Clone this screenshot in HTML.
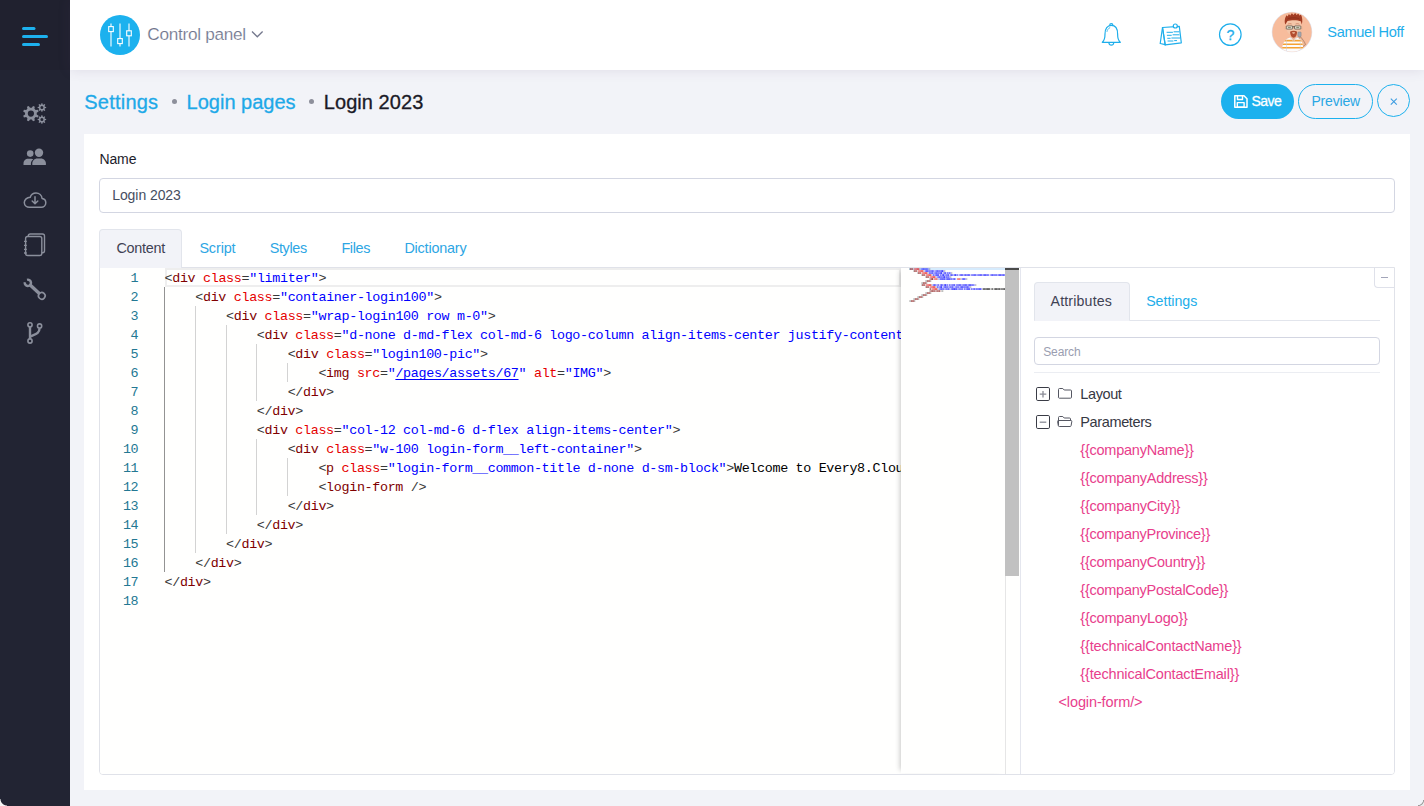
<!DOCTYPE html>
<html lang="en">
<head>
<meta charset="utf-8">
<title>Login 2023 - Control panel</title>
<style>
*{box-sizing:border-box;margin:0;padding:0}
html,body{width:1424px;height:806px;overflow:hidden}
body{background:#f2f3f8;font-family:"Liberation Sans",Arial,sans-serif;font-size:14px;color:#3f4254;position:relative}
.abs{position:absolute}
.t{position:absolute;white-space:nowrap;line-height:1}
/* sidebar */
#side{position:absolute;left:0;top:0;width:70px;height:806px;background:#222433}
#side .brand{position:absolute;left:0;top:0;width:70px;height:70px;background:#20212f}
#side svg{position:absolute}
/* header */
#head{position:absolute;left:70px;top:0;width:1354px;height:70px;background:#fff;box-shadow:0 0 12px 0 rgba(82,63,105,.13)}
/* breadcrumbs */
.bc{font-size:20px;font-weight:400;color:#1fa8e8}
.bc.cur{color:#1a1a27}
.dot{position:absolute;width:5px;height:5px;border-radius:50%;background:#8d8f9b}
/* buttons */
.btn{position:absolute;height:34px;border-radius:18px;top:84px;font-size:14px}
/* card */
#card{position:absolute;left:84px;top:134px;width:1326px;height:656px;background:#fff}
.inp{position:absolute;border:1px solid #d3d6e2;border-radius:4px;background:#fff}
/* tabs */
.tab{font-size:14.5px;color:#2aa6e6}
/* editor */
#ed{position:absolute;left:100px;top:268px;width:920px;height:506px;background:#fffffe;overflow:hidden;border-radius:0 0 0 3px}
.ln{position:absolute;left:0;width:38.300px;text-align:right;font-family:"Liberation Mono","DejaVu Sans Mono",monospace;font-size:13.4px;letter-spacing:-.34px;line-height:19px;color:#237893;height:19px}
.cl{position:absolute;left:64.5px;font-family:"Liberation Mono","DejaVu Sans Mono",monospace;font-size:13.4px;letter-spacing:-.341px;line-height:19px;height:19px;white-space:pre;color:#000}
.cl i{font-style:normal;color:#800000}
.cl b{font-weight:normal;color:#e50000}
.cl u{text-decoration:none;color:#0000ff}
.cl s{text-decoration:none;color:#383838}
.cl u.lk{text-decoration:underline;text-decoration-skip-ink:none;text-underline-offset:2px;text-decoration-thickness:1px}
.ig{position:absolute;width:1px;background:#d3d3d3}
#mm{position:absolute;left:801px;top:0;width:105px;height:505px;background:#fffffe;box-shadow:-4px 0 5px -3px rgba(0,0,0,.22)}
#mm svg{position:absolute;left:0;top:0}
/* right panel */
#rp{position:absolute;left:1020px;top:268px;width:374px;height:506px;border-left:1px solid #e4e6ee;border-radius:0 0 3px 0;background:#fff}
.tree{font-size:14.5px;color:#2c2e3e}
.pk{font-size:14.5px;color:#e83e8c}
.cbl{position:absolute;left:0;top:799px;width:7px;height:7px;background:radial-gradient(circle at 100% 0,rgba(255,255,255,0) 6px,#f4f4f4 7px)}
.cbr{position:absolute;left:1418px;top:800px;width:6px;height:6px;background:radial-gradient(circle at 0 0,rgba(255,255,255,0) 4.700px,#999 5.400px,#999 5.600px,#ececec 6.500px)}
</style>
</head>
<body>
<div id="side"><div class="brand"></div>
<svg style="left:0;top:0" width="70" height="400" viewBox="0 0 70 400">
 <g fill="#1db1ee"><rect x="22" y="27" width="13.5" height="3" rx="1.5"/><rect x="22" y="35" width="26" height="3" rx="1.5"/><rect x="22" y="43" width="18" height="3" rx="1.5"/></g>
 <g fill="#8b8f9c" fill-rule="evenodd">
  <path d="M36.73 114.48 L38.61 115.74 L37.86 117.54 L35.65 117.11 L34.41 118.35 L34.84 120.56 L33.04 121.31 L31.78 119.43 L30.02 119.43 L28.76 121.31 L26.96 120.56 L27.39 118.35 L26.15 117.11 L23.94 117.54 L23.19 115.74 L25.07 114.48 L25.07 112.72 L23.19 111.46 L23.94 109.66 L26.15 110.09 L27.39 108.85 L26.96 106.64 L28.76 105.89 L30.02 107.77 L31.78 107.77 L33.04 105.89 L34.84 106.64 L34.41 108.85 L35.65 110.09 L37.86 109.66 L38.61 111.46 L36.73 112.72Z M27.80 113.60 a3.10 3.10 0 1 0 6.20 0 a3.10 3.10 0 1 0 -6.20 0Z"/>
  <path d="M44.91 106.75 L46.17 106.98 L46.17 108.02 L44.91 108.25 L44.56 109.10 L45.29 110.15 L44.55 110.89 L43.50 110.16 L42.65 110.51 L42.42 111.77 L41.38 111.77 L41.15 110.51 L40.30 110.16 L39.25 110.89 L38.51 110.15 L39.24 109.10 L38.89 108.25 L37.63 108.02 L37.63 106.98 L38.89 106.75 L39.24 105.90 L38.51 104.85 L39.25 104.11 L40.30 104.84 L41.15 104.49 L41.38 103.23 L42.42 103.23 L42.65 104.49 L43.50 104.84 L44.55 104.11 L45.29 104.85 L44.56 105.90Z M40.40 107.50 a1.50 1.50 0 1 0 3.00 0 a1.50 1.50 0 1 0 -3.00 0Z"/>
  <path d="M44.91 118.85 L46.17 119.08 L46.17 120.12 L44.91 120.35 L44.56 121.20 L45.29 122.25 L44.55 122.99 L43.50 122.26 L42.65 122.61 L42.42 123.87 L41.38 123.87 L41.15 122.61 L40.30 122.26 L39.25 122.99 L38.51 122.25 L39.24 121.20 L38.89 120.35 L37.63 120.12 L37.63 119.08 L38.89 118.85 L39.24 118.00 L38.51 116.95 L39.25 116.21 L40.30 116.94 L41.15 116.59 L41.38 115.33 L42.42 115.33 L42.65 116.59 L43.50 116.94 L44.55 116.21 L45.29 116.95 L44.56 118.00Z M40.40 119.60 a1.50 1.50 0 1 0 3.00 0 a1.50 1.50 0 1 0 -3.00 0Z"/>
 </g>
 <g fill="#8b8f9c">
  <circle cx="30.2" cy="153.6" r="3.3"/>
  <path d="M23.5 165v-1.6c0-2.6 2.1-4.6 4.6-4.6h3.2c.7 0 1.4.2 2 .5-1.500 1.100-2.400 2.800-2.400 4.700v1z"/>
  <circle cx="39" cy="152.800" r="4.2"/>
  <path d="M32.300 165v-1.500c0-2.800 2.200-5 5-5h3.600c2.800 0 5 2.200 5 5v1.500z"/>
 </g>
 <g fill="none" stroke="#8b8f9c" stroke-width="1.5" stroke-linecap="round" stroke-linejoin="round">
  <path d="M29.500 207.200h11.800c2.500 0 4.500-2 4.500-4.400 0-2.200-1.600-4-3.700-4.300-.3-3.100-2.900-5.400-6.100-5.400-2.700 0-5 1.700-5.800 4.200-3.200.100-5.900 2.300-5.900 5.200 0 2.600 2.300 4.700 5.200 4.700z"/>
  <path d="M35 196.800v6.800M32.200 201l2.800 2.800 2.800-2.800"/>
 </g>
 <g fill="none" stroke="#8b8f9c" stroke-width="1.400" stroke-linejoin="round">
  <path d="M28.300 236.500v-.5c0-1.100.9-2 2-2h12.200c1.100 0 2 .9 2 2v14.800c0 1.100-.9 2-2 2h-.6"/>
  <rect x="25.600" y="236.500" width="16.200" height="19" rx="2"/>
  <path d="M24 241.300h2.800M24 245.300h2.800M24 249.300h2.800M24 253h2.800" stroke-width="1.300"/>
 </g>
 <g fill="none" stroke="#8b8f9c" transform="translate(27.900 282.900) rotate(43)">
  <path d="M-2.680 1.600A3.100 3.100 0 1 0 -2.680 -1.600" stroke-width="2.500"/>
  <path d="M2 0h14" stroke-width="3.300"/>
  <circle cx="19" cy="0" r="3.300" stroke-width="1.600" fill="#222433"/>
 </g>
 <g fill="none" stroke="#8b8f9c" stroke-width="1.600">
  <path d="M30 327v12" stroke-width="2.400"/>
  <path d="M39.500 328.500c0 5-4 5.500-9.500 8" stroke-width="2.400"/>
  <circle cx="30" cy="324.800" r="2.100" fill="#222433"/>
  <circle cx="39.600" cy="326" r="2.100" fill="#222433"/>
  <circle cx="30" cy="341" r="2.100" fill="#222433"/>
 </g>
</svg>
</div>

<div id="head"></div>
<svg class="abs" style="left:95px;top:10px" width="180" height="50" viewBox="95 10 180 50">
 <circle cx="120" cy="35" r="20" fill="#1cb1ee"/>
 <g stroke="#fff" stroke-width="1.100" fill="#1cb1ee">
  <path d="M111 23.500v23M120 23.500v23M129 23.500v23" fill="none"/>
  <rect x="108.700" y="26.600" width="4.600" height="5"/>
  <rect x="117.700" y="38.600" width="4.600" height="5"/>
  <rect x="126.700" y="30.800" width="4.600" height="5"/>
 </g>
 <path d="M252 31.500l5.300 5.300 5.300-5.300" fill="none" stroke="#74788d" stroke-width="1.300"/>
</svg>
<span class="t" style="left:147.3px;top:25.64px;font-size:17.2px;letter-spacing:-0.281px;color:#6f748c;-webkit-text-stroke:0.2px #fff;">Control panel</span>
<svg class="abs" style="left:1095px;top:18px" width="160" height="34" viewBox="1095 18 160 34" fill="none" stroke="#1eaeeb" stroke-width="1.200" stroke-linejoin="round" stroke-linecap="round">
 <!-- bell -->
 <path d="M1102.300 42.300c2.300-1.800 2.700-4.300 2.700-8.300 0-5.300 2.400-8.600 6.300-8.600s6.300 3.300 6.300 8.600c0 4 .4 6.500 2.700 8.300z"/>
 <path d="M1109.700 25.300c0-1 .7-1.600 1.600-1.600s1.600.6 1.600 1.600"/>
 <path d="M1108.800 42.500c.2 1.600 1.200 2.700 2.500 2.700s2.300-1.100 2.500-2.700"/>
 <path d="M1107 31.500c.4-1.900 1.400-3.200 2.800-3.800" stroke-width=".8"/>
 <!-- notepad -->
 <path d="M1162.500 27.500l-2.300 16 5 1.200"/>
 <path d="M1162.500 27.500l16.800-1.200 2 16.500-16.100 2z"/>
 <path d="M1162.500 27.500l2.700 17.300"/>
 <circle cx="1175.300" cy="26" r="2"  fill="#fff"/>
 <path d="M1167 32.300h5.500M1174 31.800h5M1167.300 35.300h4M1173 34.800h6M1167.700 38.300h2.500M1171.800 38h8M1168 41h5M1174.600 40.600h2" stroke-width="1"/>
 <!-- help -->
 <circle cx="1230.300" cy="34.600" r="10.800"/>
</svg>
<span class="t" style="left:1226.5px;top:27.78px;font-size:14.2px;color:#1eaeeb;-webkit-text-stroke:0.3px #1eaeeb;">?</span>
<svg class="abs" style="left:1269.900px;top:9.900px" width="44" height="44" viewBox="0 0 44 44">
 <defs><clipPath id="avc"><circle cx="22" cy="22" r="19.700"/></clipPath>
 <clipPath id="shc"><path d="M11.600 44c.3-8.500 2-14 6-15.500l3.500-1.300h4.500l3.500 1.300c3 1.200 4 5 4.500 15.500z"/></clipPath></defs>
 <circle cx="22" cy="22" r="20.300" fill="#e1e5f0"/>
 <g clip-path="url(#avc)">
  <rect width="44" height="44" fill="#f7bc9c"/>
  <path d="M30.300 26.500c2.200 2.800 4.200 5 5.200 8l-3 2.500c-1-3-2.500-5.500-3.700-7.500z" fill="#f0b896" stroke="#7a5a4a" stroke-width=".5"/>
  <g clip-path="url(#shc)">
   <rect x="10" y="26" width="28" height="18" fill="#fcfcfd"/>
   <path d="M10 30.600h28M10 34.200h28M10 37.800h28" stroke="#f5a233" stroke-width="1.600"/>
   <path d="M16.500 29v12M30.300 29v12" stroke="#c9c9d6" stroke-width=".5"/>
  </g>
  <path d="M20.300 27l3.300 3.500 3.300-3.500z" fill="#eeb597"/>
  <path d="M19.800 27.300l3.800 4 3.800-4" fill="none" stroke="#d8d8e2" stroke-width=".7"/>
  <ellipse cx="15.700" cy="18.200" rx="1.400" ry="2" fill="#efb999"/>
  <ellipse cx="31.500" cy="18.200" rx="1.400" ry="2" fill="#efb999"/>
  <path d="M16.500 14c0-3.500 3-5.500 7.100-5.500s7.100 2 7.100 5.500v4.500c0 3.800-3.400 7-7.100 7s-7.100-3.200-7.100-7z" fill="#f4c6a9"/>
  <path d="M20 21.800c1-.7 2.200-1 3.600-1s2.600.3 3.600 1c-.3 3.700-1.700 6-3.600 6s-3.300-2.300-3.600-6zm2 .7c.4.800 1 1.200 1.600 1.200s1.200-.4 1.600-1.200c-.5-.2-1-.3-1.600-.3s-1.100.1-1.600.3z" fill="#b34d2f" fill-rule="evenodd"/>
  <path d="M15.300 14.500c-1.300-4 0-8 1.500-9.300l.8 1.200 1.300-2.300 1.300 1.500 1.700-2.400 1.500 1.800 1.800-2 1.300 2 2-1.500.7 2 1.800-.7c1.300 2.500 1.800 6 .8 9.700l-1-3.200c-2.500-1.400-9.500-1.600-13.300-.3z" fill="#a23c23"/>
  <path d="M17.500 9c2-1.500 9.500-1.700 12 0" stroke="#8a2f1b" stroke-width=".8" fill="none"/>
  <path d="M17.800 14.300c1-.7 2.600-.8 3.800-.3M25.600 14c1.200-.5 2.800-.4 3.800.3" stroke="#b86a4c" stroke-width=".6" fill="none"/>
  <rect x="16.300" y="15.900" width="6.300" height="3.200" rx=".5" fill="#d9dfd4" fill-opacity=".7" stroke="#3a3a36" stroke-width=".6"/>
  <rect x="24.500" y="15.900" width="6.300" height="3.200" rx=".5" fill="#d9dfd4" fill-opacity=".7" stroke="#3a3a36" stroke-width=".6"/>
  <path d="M22.600 16.800h1.900" stroke="#33332f" stroke-width=".8"/>
  <path d="M18 17.500h2.800M26.300 17.500h2.800" stroke="#6f7a5a" stroke-width=".8"/>
  <rect x="27.900" y="22" width="3.200" height="4.700" rx=".7" fill="#a3a7b0" stroke="#7d8088" stroke-width=".5"/>
 </g>
</svg>
<span class="t" style="left:1327.3px;top:24.94px;font-size:14.6px;letter-spacing:-0.332px;color:#1eaeeb;">Samuel Hoff</span>

<span class="t" style="left:84.3px;top:91.67px;font-size:20px;letter-spacing:0.217px;color:#1ea9e8;-webkit-text-stroke:0.3px currentColor;">Settings</span>
<div class="dot" style="left:172px;top:99.200px"></div>
<span class="t" style="left:186.6px;top:91.67px;font-size:20px;letter-spacing:0.001px;color:#1ea9e8;-webkit-text-stroke:0.3px currentColor;">Login pages</span>
<div class="dot" style="left:309.300px;top:99.200px"></div>
<span class="t" style="left:323.8px;top:91.67px;font-size:20px;letter-spacing:0.052px;color:#1a1a27;-webkit-text-stroke:0.3px currentColor;">Login 2023</span>
<div class="btn" style="left:1221px;width:73px;height:35px;background:#1cb1ee"></div>
<svg class="abs" style="left:1233px;top:94px" width="16" height="15" viewBox="0 0 16 15" fill="none" stroke="#fff" stroke-width="1.500" stroke-linejoin="round">
 <path d="M1.800 1.700h9.200l3 3v8.600H1.800z"/><path d="M4.500 1.900v3.600h5V1.900" stroke-width="1.400"/><rect x="4.300" y="8.600" width="6.800" height="4.500" stroke-width="1.400"/>
</svg>
<span class="t" style="left:1251.6px;top:93.95px;font-size:14px;letter-spacing:-0.580px;color:#fff;-webkit-text-stroke:0.3px #fff;">Save</span>
<div class="btn" style="left:1298px;width:75px;height:35px;border:1px solid #1cb1ee"></div>
<span class="t" style="left:1311.4px;top:93.95px;font-size:14px;letter-spacing:-0.171px;color:#2aa7e4;">Preview</span>
<div class="btn" style="left:1377px;width:33px;height:33px;top:84px;border:1px solid #1cb1ee"></div>
<svg class="abs" style="left:1389px;top:96.600px" width="10" height="10" viewBox="0 0 10 10"><path d="M1.800 1.600l6 6M7.800 1.600l-6 6" stroke="#3d9ce0" stroke-width="1.100" fill="none"/></svg>
<div id="card"></div>
<span class="t" style="left:99.5px;top:152.15px;font-size:14px;letter-spacing:-0.140px;color:#1d1d2b;">Name</span><div class="inp" style="left:99px;top:178px;width:1296px;height:35px"></div>
<span class="t" style="left:112.2px;top:188.15px;font-size:14px;letter-spacing:-0.070px;color:#464e5f;">Login 2023</span><div class="abs" style="left:99px;top:267px;width:1296px;height:508px;border:1px solid #e0e2e9;border-radius:0 0 4px 4px"></div>
<div class="abs" style="left:99px;top:229px;width:83px;height:39px;background:#f2f3f8;border:1px solid #e2e5ec;border-bottom:0;border-radius:4px 4px 0 0"></div>
<span class="t" style="left:116.4px;top:240.81px;font-size:14.4px;letter-spacing:-0.258px;color:#3f4254;">Content</span><span class="t" style="left:199.4px;top:240.81px;font-size:14.4px;letter-spacing:-0.116px;color:#2da6e4;">Script</span><span class="t" style="left:269.7px;top:240.81px;font-size:14.4px;letter-spacing:-0.334px;color:#2da6e4;">Styles</span><span class="t" style="left:341.4px;top:240.81px;font-size:14.4px;letter-spacing:-0.358px;color:#2da6e4;">Files</span><span class="t" style="left:404.4px;top:240.81px;font-size:14.4px;letter-spacing:-0.198px;color:#2da6e4;">Dictionary</span><div id="ed">
<div class="abs" style="left:65px;top:0;width:736px;height:19px;border:2px solid #eeeeee"></div>
<div class="ig" style="left:64.0px;top:19px;height:285px;background:#939393"></div>
<div class="ig" style="left:94.8px;top:38px;height:247px;background:#d3d3d3"></div>
<div class="ig" style="left:125.6px;top:57px;height:209px;background:#d3d3d3"></div>
<div class="ig" style="left:156.4px;top:76px;height:57px;background:#d3d3d3"></div>
<div class="ig" style="left:156.4px;top:171px;height:76px;background:#d3d3d3"></div>
<div class="ig" style="left:187.2px;top:95px;height:19px;background:#d3d3d3"></div>
<div class="ig" style="left:187.2px;top:190px;height:38px;background:#d3d3d3"></div>
<div class="ln" style="top:1px">1</div><div class="cl" style="top:1px"><s>&lt;</s><i>div</i> <b>class</b><s>=</s><u>"limiter"</u><s>&gt;</s></div>
<div class="ln" style="top:20px">2</div><div class="cl" style="top:20px">    <s>&lt;</s><i>div</i> <b>class</b><s>=</s><u>"container-login100"</u><s>&gt;</s></div>
<div class="ln" style="top:39px">3</div><div class="cl" style="top:39px">        <s>&lt;</s><i>div</i> <b>class</b><s>=</s><u>"wrap-login100 row m-0"</u><s>&gt;</s></div>
<div class="ln" style="top:58px">4</div><div class="cl" style="top:58px">            <s>&lt;</s><i>div</i> <b>class</b><s>=</s><u>"d-none d-md-flex col-md-6 logo-column align-items-center justify-content-center"</u><s>&gt;</s></div>
<div class="ln" style="top:77px">5</div><div class="cl" style="top:77px">                <s>&lt;</s><i>div</i> <b>class</b><s>=</s><u>"login100-pic"</u><s>&gt;</s></div>
<div class="ln" style="top:96px">6</div><div class="cl" style="top:96px">                    <s>&lt;</s><i>img</i> <b>src</b><s>=</s><u>"</u><u class="lk">/pages/assets/67</u><u>"</u> <b>alt</b><s>=</s><u>"IMG"</u><s>&gt;</s></div>
<div class="ln" style="top:115px">7</div><div class="cl" style="top:115px">                <s>&lt;/</s><i>div</i><s>&gt;</s></div>
<div class="ln" style="top:134px">8</div><div class="cl" style="top:134px">            <s>&lt;/</s><i>div</i><s>&gt;</s></div>
<div class="ln" style="top:153px">9</div><div class="cl" style="top:153px">            <s>&lt;</s><i>div</i> <b>class</b><s>=</s><u>"col-12 col-md-6 d-flex align-items-center"</u><s>&gt;</s></div>
<div class="ln" style="top:172px">10</div><div class="cl" style="top:172px">                <s>&lt;</s><i>div</i> <b>class</b><s>=</s><u>"w-100 login-form__left-container"</u><s>&gt;</s></div>
<div class="ln" style="top:191px">11</div><div class="cl" style="top:191px">                    <s>&lt;</s><i>p</i> <b>class</b><s>=</s><u>"login-form__common-title d-none d-sm-block"</u><s>&gt;</s>Welcome to Every8.Cloud<s>&lt;/</s><i>p</i><s>&gt;</s></div>
<div class="ln" style="top:210px">12</div><div class="cl" style="top:210px">                    <s>&lt;</s><i>login-form</i> <s>/</s><s>&gt;</s></div>
<div class="ln" style="top:229px">13</div><div class="cl" style="top:229px">                <s>&lt;/</s><i>div</i><s>&gt;</s></div>
<div class="ln" style="top:248px">14</div><div class="cl" style="top:248px">            <s>&lt;/</s><i>div</i><s>&gt;</s></div>
<div class="ln" style="top:267px">15</div><div class="cl" style="top:267px">        <s>&lt;/</s><i>div</i><s>&gt;</s></div>
<div class="ln" style="top:286px">16</div><div class="cl" style="top:286px">    <s>&lt;/</s><i>div</i><s>&gt;</s></div>
<div class="ln" style="top:305px">17</div><div class="cl" style="top:305px"><s>&lt;/</s><i>div</i><s>&gt;</s></div>
<div class="ln" style="top:324px">18</div>
<div id="mm"><svg width="105" height="60" viewBox="0 0 105 60"><rect x="8" y="0" width="97" height="2" fill="#d6ebfd"/><rect x="8.3" y="0.2" width="1" height="1.700" fill="#383838" opacity="0.36"/><rect x="9.3" y="0.2" width="1" height="1.700" fill="#800000" opacity="0.8"/><rect x="10.3" y="0.2" width="1" height="1.700" fill="#800000" opacity="0.55"/><rect x="11.3" y="0.2" width="1" height="1.700" fill="#800000" opacity="0.68"/><rect x="13.3" y="0.2" width="1" height="1.700" fill="#e50000" opacity="0.68"/><rect x="14.3" y="0.2" width="1" height="1.700" fill="#e50000" opacity="0.55"/><rect x="15.3" y="0.2" width="3" height="1.700" fill="#e50000" opacity="0.68"/><rect x="18.3" y="0.2" width="1" height="1.700" fill="#383838" opacity="0.28"/><rect x="19.3" y="0.2" width="1" height="1.700" fill="#0000ff" opacity="0.28"/><rect x="20.3" y="0.2" width="2" height="1.700" fill="#0000ff" opacity="0.55"/><rect x="22.3" y="0.2" width="1" height="1.700" fill="#0000ff" opacity="0.8"/><rect x="23.3" y="0.2" width="2" height="1.700" fill="#0000ff" opacity="0.55"/><rect x="25.3" y="0.2" width="1" height="1.700" fill="#0000ff" opacity="0.68"/><rect x="26.3" y="0.2" width="1" height="1.700" fill="#0000ff" opacity="0.55"/><rect x="27.3" y="0.2" width="1" height="1.700" fill="#0000ff" opacity="0.28"/><rect x="28.3" y="0.2" width="1" height="1.700" fill="#383838" opacity="0.36"/><rect x="12.3" y="2.2" width="1" height="1.700" fill="#383838" opacity="0.36"/><rect x="13.3" y="2.2" width="1" height="1.700" fill="#800000" opacity="0.8"/><rect x="14.3" y="2.2" width="1" height="1.700" fill="#800000" opacity="0.55"/><rect x="15.3" y="2.2" width="1" height="1.700" fill="#800000" opacity="0.68"/><rect x="17.3" y="2.2" width="1" height="1.700" fill="#e50000" opacity="0.68"/><rect x="18.3" y="2.2" width="1" height="1.700" fill="#e50000" opacity="0.55"/><rect x="19.3" y="2.2" width="3" height="1.700" fill="#e50000" opacity="0.68"/><rect x="22.3" y="2.2" width="1" height="1.700" fill="#383838" opacity="0.28"/><rect x="23.3" y="2.2" width="1" height="1.700" fill="#0000ff" opacity="0.28"/><rect x="24.3" y="2.2" width="3" height="1.700" fill="#0000ff" opacity="0.68"/><rect x="27.3" y="2.2" width="1" height="1.700" fill="#0000ff" opacity="0.55"/><rect x="28.3" y="2.2" width="1" height="1.700" fill="#0000ff" opacity="0.68"/><rect x="29.3" y="2.2" width="1" height="1.700" fill="#0000ff" opacity="0.55"/><rect x="30.3" y="2.2" width="2" height="1.700" fill="#0000ff" opacity="0.68"/><rect x="32.3" y="2.2" width="1" height="1.700" fill="#0000ff" opacity="0.55"/><rect x="33.3" y="2.2" width="1" height="1.700" fill="#0000ff" opacity="0.28"/><rect x="34.3" y="2.2" width="1" height="1.700" fill="#0000ff" opacity="0.55"/><rect x="35.3" y="2.2" width="1" height="1.700" fill="#0000ff" opacity="0.68"/><rect x="36.3" y="2.2" width="1" height="1.700" fill="#0000ff" opacity="0.8"/><rect x="37.3" y="2.2" width="1" height="1.700" fill="#0000ff" opacity="0.55"/><rect x="38.3" y="2.2" width="1" height="1.700" fill="#0000ff" opacity="0.68"/><rect x="39.3" y="2.2" width="1" height="1.700" fill="#0000ff" opacity="0.55"/><rect x="40.3" y="2.2" width="2" height="1.700" fill="#0000ff" opacity="0.8"/><rect x="42.3" y="2.2" width="1" height="1.700" fill="#0000ff" opacity="0.28"/><rect x="43.3" y="2.2" width="1" height="1.700" fill="#383838" opacity="0.36"/><rect x="16.3" y="4.2" width="1" height="1.700" fill="#383838" opacity="0.36"/><rect x="17.3" y="4.2" width="1" height="1.700" fill="#800000" opacity="0.8"/><rect x="18.3" y="4.2" width="1" height="1.700" fill="#800000" opacity="0.55"/><rect x="19.3" y="4.2" width="1" height="1.700" fill="#800000" opacity="0.68"/><rect x="21.3" y="4.2" width="1" height="1.700" fill="#e50000" opacity="0.68"/><rect x="22.3" y="4.2" width="1" height="1.700" fill="#e50000" opacity="0.55"/><rect x="23.3" y="4.2" width="3" height="1.700" fill="#e50000" opacity="0.68"/><rect x="26.3" y="4.2" width="1" height="1.700" fill="#383838" opacity="0.28"/><rect x="27.3" y="4.2" width="1" height="1.700" fill="#0000ff" opacity="0.28"/><rect x="28.3" y="4.2" width="1" height="1.700" fill="#0000ff" opacity="0.8"/><rect x="29.3" y="4.2" width="1" height="1.700" fill="#0000ff" opacity="0.55"/><rect x="30.3" y="4.2" width="1" height="1.700" fill="#0000ff" opacity="0.68"/><rect x="31.3" y="4.2" width="1" height="1.700" fill="#0000ff" opacity="0.8"/><rect x="32.3" y="4.2" width="1" height="1.700" fill="#0000ff" opacity="0.28"/><rect x="33.3" y="4.2" width="1" height="1.700" fill="#0000ff" opacity="0.55"/><rect x="34.3" y="4.2" width="1" height="1.700" fill="#0000ff" opacity="0.68"/><rect x="35.3" y="4.2" width="1" height="1.700" fill="#0000ff" opacity="0.8"/><rect x="36.3" y="4.2" width="1" height="1.700" fill="#0000ff" opacity="0.55"/><rect x="37.3" y="4.2" width="1" height="1.700" fill="#0000ff" opacity="0.68"/><rect x="38.3" y="4.2" width="1" height="1.700" fill="#0000ff" opacity="0.55"/><rect x="39.3" y="4.2" width="2" height="1.700" fill="#0000ff" opacity="0.8"/><rect x="42.3" y="4.2" width="1" height="1.700" fill="#0000ff" opacity="0.55"/><rect x="43.3" y="4.2" width="1" height="1.700" fill="#0000ff" opacity="0.68"/><rect x="44.3" y="4.2" width="1" height="1.700" fill="#0000ff" opacity="0.8"/><rect x="46.3" y="4.2" width="1" height="1.700" fill="#0000ff" opacity="0.8"/><rect x="47.3" y="4.2" width="1" height="1.700" fill="#0000ff" opacity="0.28"/><rect x="48.3" y="4.2" width="1" height="1.700" fill="#0000ff" opacity="0.8"/><rect x="49.3" y="4.2" width="1" height="1.700" fill="#0000ff" opacity="0.28"/><rect x="50.3" y="4.2" width="1" height="1.700" fill="#383838" opacity="0.36"/><rect x="20.3" y="6.2" width="1" height="1.700" fill="#383838" opacity="0.36"/><rect x="21.3" y="6.2" width="1" height="1.700" fill="#800000" opacity="0.8"/><rect x="22.3" y="6.2" width="1" height="1.700" fill="#800000" opacity="0.55"/><rect x="23.3" y="6.2" width="1" height="1.700" fill="#800000" opacity="0.68"/><rect x="25.3" y="6.2" width="1" height="1.700" fill="#e50000" opacity="0.68"/><rect x="26.3" y="6.2" width="1" height="1.700" fill="#e50000" opacity="0.55"/><rect x="27.3" y="6.2" width="3" height="1.700" fill="#e50000" opacity="0.68"/><rect x="30.3" y="6.2" width="1" height="1.700" fill="#383838" opacity="0.28"/><rect x="31.3" y="6.2" width="1" height="1.700" fill="#0000ff" opacity="0.28"/><rect x="32.3" y="6.2" width="1" height="1.700" fill="#0000ff" opacity="0.8"/><rect x="33.3" y="6.2" width="1" height="1.700" fill="#0000ff" opacity="0.28"/><rect x="34.3" y="6.2" width="4" height="1.700" fill="#0000ff" opacity="0.68"/><rect x="39.3" y="6.2" width="1" height="1.700" fill="#0000ff" opacity="0.8"/><rect x="40.3" y="6.2" width="1" height="1.700" fill="#0000ff" opacity="0.28"/><rect x="41.3" y="6.2" width="2" height="1.700" fill="#0000ff" opacity="0.8"/><rect x="43.3" y="6.2" width="1" height="1.700" fill="#0000ff" opacity="0.28"/><rect x="44.3" y="6.2" width="2" height="1.700" fill="#0000ff" opacity="0.55"/><rect x="46.3" y="6.2" width="2" height="1.700" fill="#0000ff" opacity="0.68"/><rect x="49.3" y="6.2" width="2" height="1.700" fill="#0000ff" opacity="0.68"/><rect x="51.3" y="6.2" width="1" height="1.700" fill="#0000ff" opacity="0.55"/><rect x="52.3" y="6.2" width="1" height="1.700" fill="#0000ff" opacity="0.28"/><rect x="53.3" y="6.2" width="2" height="1.700" fill="#0000ff" opacity="0.8"/><rect x="55.3" y="6.2" width="1" height="1.700" fill="#0000ff" opacity="0.28"/><rect x="56.3" y="6.2" width="1" height="1.700" fill="#0000ff" opacity="0.68"/><rect x="58.3" y="6.2" width="1" height="1.700" fill="#0000ff" opacity="0.55"/><rect x="59.3" y="6.2" width="1" height="1.700" fill="#0000ff" opacity="0.68"/><rect x="60.3" y="6.2" width="1" height="1.700" fill="#0000ff" opacity="0.8"/><rect x="61.3" y="6.2" width="1" height="1.700" fill="#0000ff" opacity="0.68"/><rect x="62.3" y="6.2" width="1" height="1.700" fill="#0000ff" opacity="0.28"/><rect x="63.3" y="6.2" width="2" height="1.700" fill="#0000ff" opacity="0.68"/><rect x="65.3" y="6.2" width="1" height="1.700" fill="#0000ff" opacity="0.55"/><rect x="66.3" y="6.2" width="1" height="1.700" fill="#0000ff" opacity="0.68"/><rect x="67.3" y="6.2" width="1" height="1.700" fill="#0000ff" opacity="0.8"/><rect x="68.3" y="6.2" width="1" height="1.700" fill="#0000ff" opacity="0.68"/><rect x="70.3" y="6.2" width="1" height="1.700" fill="#0000ff" opacity="0.68"/><rect x="71.3" y="6.2" width="2" height="1.700" fill="#0000ff" opacity="0.55"/><rect x="73.3" y="6.2" width="1" height="1.700" fill="#0000ff" opacity="0.8"/><rect x="74.3" y="6.2" width="1" height="1.700" fill="#0000ff" opacity="0.68"/><rect x="75.3" y="6.2" width="1" height="1.700" fill="#0000ff" opacity="0.28"/><rect x="76.3" y="6.2" width="2" height="1.700" fill="#0000ff" opacity="0.55"/><rect x="78.3" y="6.2" width="1" height="1.700" fill="#0000ff" opacity="0.68"/><rect x="79.3" y="6.2" width="1" height="1.700" fill="#0000ff" opacity="0.8"/><rect x="80.3" y="6.2" width="1" height="1.700" fill="#0000ff" opacity="0.68"/><rect x="81.3" y="6.2" width="1" height="1.700" fill="#0000ff" opacity="0.28"/><rect x="82.3" y="6.2" width="3" height="1.700" fill="#0000ff" opacity="0.68"/><rect x="85.3" y="6.2" width="1" height="1.700" fill="#0000ff" opacity="0.55"/><rect x="86.3" y="6.2" width="1" height="1.700" fill="#0000ff" opacity="0.68"/><rect x="87.3" y="6.2" width="1" height="1.700" fill="#0000ff" opacity="0.55"/><rect x="89.3" y="6.2" width="1" height="1.700" fill="#0000ff" opacity="0.55"/><rect x="90.3" y="6.2" width="2" height="1.700" fill="#0000ff" opacity="0.68"/><rect x="92.3" y="6.2" width="3" height="1.700" fill="#0000ff" opacity="0.55"/><rect x="95.3" y="6.2" width="1" height="1.700" fill="#0000ff" opacity="0.68"/><rect x="96.3" y="6.2" width="1" height="1.700" fill="#0000ff" opacity="0.28"/><rect x="97.3" y="6.2" width="3" height="1.700" fill="#0000ff" opacity="0.68"/><rect x="100.3" y="6.2" width="1" height="1.700" fill="#0000ff" opacity="0.55"/><rect x="101.3" y="6.2" width="2" height="1.700" fill="#0000ff" opacity="0.68"/><rect x="103.3" y="6.2" width="1" height="1.700" fill="#0000ff" opacity="0.55"/><rect x="104.3" y="6.2" width="0.7" height="1.700" fill="#0000ff" opacity="0.28"/><rect x="24.3" y="8.2" width="1" height="1.700" fill="#383838" opacity="0.36"/><rect x="25.3" y="8.2" width="1" height="1.700" fill="#800000" opacity="0.8"/><rect x="26.3" y="8.2" width="1" height="1.700" fill="#800000" opacity="0.55"/><rect x="27.3" y="8.2" width="1" height="1.700" fill="#800000" opacity="0.68"/><rect x="29.3" y="8.2" width="1" height="1.700" fill="#e50000" opacity="0.68"/><rect x="30.3" y="8.2" width="1" height="1.700" fill="#e50000" opacity="0.55"/><rect x="31.3" y="8.2" width="3" height="1.700" fill="#e50000" opacity="0.68"/><rect x="34.3" y="8.2" width="1" height="1.700" fill="#383838" opacity="0.28"/><rect x="35.3" y="8.2" width="1" height="1.700" fill="#0000ff" opacity="0.28"/><rect x="36.3" y="8.2" width="1" height="1.700" fill="#0000ff" opacity="0.55"/><rect x="37.3" y="8.2" width="1" height="1.700" fill="#0000ff" opacity="0.68"/><rect x="38.3" y="8.2" width="1" height="1.700" fill="#0000ff" opacity="0.8"/><rect x="39.3" y="8.2" width="1" height="1.700" fill="#0000ff" opacity="0.55"/><rect x="40.3" y="8.2" width="1" height="1.700" fill="#0000ff" opacity="0.68"/><rect x="41.3" y="8.2" width="1" height="1.700" fill="#0000ff" opacity="0.55"/><rect x="42.3" y="8.2" width="2" height="1.700" fill="#0000ff" opacity="0.8"/><rect x="44.3" y="8.2" width="1" height="1.700" fill="#0000ff" opacity="0.28"/><rect x="45.3" y="8.2" width="1" height="1.700" fill="#0000ff" opacity="0.8"/><rect x="46.3" y="8.2" width="1" height="1.700" fill="#0000ff" opacity="0.55"/><rect x="47.3" y="8.2" width="1" height="1.700" fill="#0000ff" opacity="0.68"/><rect x="48.3" y="8.2" width="1" height="1.700" fill="#0000ff" opacity="0.28"/><rect x="49.3" y="8.2" width="1" height="1.700" fill="#383838" opacity="0.36"/><rect x="28.3" y="10.2" width="1" height="1.700" fill="#383838" opacity="0.36"/><rect x="29.3" y="10.2" width="1" height="1.700" fill="#800000" opacity="0.55"/><rect x="30.3" y="10.2" width="2" height="1.700" fill="#800000" opacity="0.8"/><rect x="33.3" y="10.2" width="1" height="1.700" fill="#e50000" opacity="0.68"/><rect x="34.3" y="10.2" width="1" height="1.700" fill="#e50000" opacity="0.55"/><rect x="35.3" y="10.2" width="1" height="1.700" fill="#e50000" opacity="0.68"/><rect x="36.3" y="10.2" width="1" height="1.700" fill="#383838" opacity="0.28"/><rect x="37.3" y="10.2" width="1" height="1.700" fill="#0000ff" opacity="0.28"/><rect x="38.3" y="10.2" width="1" height="1.700" fill="#0000ff" opacity="0.36"/><rect x="39.3" y="10.2" width="1" height="1.700" fill="#0000ff" opacity="0.8"/><rect x="40.3" y="10.2" width="1" height="1.700" fill="#0000ff" opacity="0.68"/><rect x="41.3" y="10.2" width="1" height="1.700" fill="#0000ff" opacity="0.8"/><rect x="42.3" y="10.2" width="2" height="1.700" fill="#0000ff" opacity="0.68"/><rect x="44.3" y="10.2" width="1" height="1.700" fill="#0000ff" opacity="0.36"/><rect x="45.3" y="10.2" width="4" height="1.700" fill="#0000ff" opacity="0.68"/><rect x="49.3" y="10.2" width="1" height="1.700" fill="#0000ff" opacity="0.55"/><rect x="50.3" y="10.2" width="1" height="1.700" fill="#0000ff" opacity="0.68"/><rect x="51.3" y="10.2" width="1" height="1.700" fill="#0000ff" opacity="0.36"/><rect x="52.3" y="10.2" width="2" height="1.700" fill="#0000ff" opacity="0.68"/><rect x="54.3" y="10.2" width="1" height="1.700" fill="#0000ff" opacity="0.28"/><rect x="56.3" y="10.2" width="1" height="1.700" fill="#e50000" opacity="0.68"/><rect x="57.3" y="10.2" width="2" height="1.700" fill="#e50000" opacity="0.55"/><rect x="59.3" y="10.2" width="1" height="1.700" fill="#383838" opacity="0.28"/><rect x="60.3" y="10.2" width="1" height="1.700" fill="#0000ff" opacity="0.28"/><rect x="61.3" y="10.2" width="1" height="1.700" fill="#0000ff" opacity="0.68"/><rect x="62.3" y="10.2" width="1" height="1.700" fill="#0000ff" opacity="0.8"/><rect x="63.3" y="10.2" width="1" height="1.700" fill="#0000ff" opacity="0.68"/><rect x="64.3" y="10.2" width="1" height="1.700" fill="#0000ff" opacity="0.28"/><rect x="65.3" y="10.2" width="1" height="1.700" fill="#383838" opacity="0.36"/><rect x="24.3" y="12.2" width="2" height="1.700" fill="#383838" opacity="0.36"/><rect x="26.3" y="12.2" width="1" height="1.700" fill="#800000" opacity="0.8"/><rect x="27.3" y="12.2" width="1" height="1.700" fill="#800000" opacity="0.55"/><rect x="28.3" y="12.2" width="1" height="1.700" fill="#800000" opacity="0.68"/><rect x="29.3" y="12.2" width="1" height="1.700" fill="#383838" opacity="0.36"/><rect x="20.3" y="14.2" width="2" height="1.700" fill="#383838" opacity="0.36"/><rect x="22.3" y="14.2" width="1" height="1.700" fill="#800000" opacity="0.8"/><rect x="23.3" y="14.2" width="1" height="1.700" fill="#800000" opacity="0.55"/><rect x="24.3" y="14.2" width="1" height="1.700" fill="#800000" opacity="0.68"/><rect x="25.3" y="14.2" width="1" height="1.700" fill="#383838" opacity="0.36"/><rect x="20.3" y="16.2" width="1" height="1.700" fill="#383838" opacity="0.36"/><rect x="21.3" y="16.2" width="1" height="1.700" fill="#800000" opacity="0.8"/><rect x="22.3" y="16.2" width="1" height="1.700" fill="#800000" opacity="0.55"/><rect x="23.3" y="16.2" width="1" height="1.700" fill="#800000" opacity="0.68"/><rect x="25.3" y="16.2" width="1" height="1.700" fill="#e50000" opacity="0.68"/><rect x="26.3" y="16.2" width="1" height="1.700" fill="#e50000" opacity="0.55"/><rect x="27.3" y="16.2" width="3" height="1.700" fill="#e50000" opacity="0.68"/><rect x="30.3" y="16.2" width="1" height="1.700" fill="#383838" opacity="0.28"/><rect x="31.3" y="16.2" width="1" height="1.700" fill="#0000ff" opacity="0.28"/><rect x="32.3" y="16.2" width="2" height="1.700" fill="#0000ff" opacity="0.68"/><rect x="34.3" y="16.2" width="1" height="1.700" fill="#0000ff" opacity="0.55"/><rect x="35.3" y="16.2" width="1" height="1.700" fill="#0000ff" opacity="0.28"/><rect x="36.3" y="16.2" width="1" height="1.700" fill="#0000ff" opacity="0.55"/><rect x="37.3" y="16.2" width="1" height="1.700" fill="#0000ff" opacity="0.68"/><rect x="39.3" y="16.2" width="2" height="1.700" fill="#0000ff" opacity="0.68"/><rect x="41.3" y="16.2" width="1" height="1.700" fill="#0000ff" opacity="0.55"/><rect x="42.3" y="16.2" width="1" height="1.700" fill="#0000ff" opacity="0.28"/><rect x="43.3" y="16.2" width="2" height="1.700" fill="#0000ff" opacity="0.8"/><rect x="45.3" y="16.2" width="1" height="1.700" fill="#0000ff" opacity="0.28"/><rect x="46.3" y="16.2" width="1" height="1.700" fill="#0000ff" opacity="0.68"/><rect x="48.3" y="16.2" width="1" height="1.700" fill="#0000ff" opacity="0.8"/><rect x="49.3" y="16.2" width="1" height="1.700" fill="#0000ff" opacity="0.28"/><rect x="50.3" y="16.2" width="2" height="1.700" fill="#0000ff" opacity="0.55"/><rect x="52.3" y="16.2" width="2" height="1.700" fill="#0000ff" opacity="0.68"/><rect x="55.3" y="16.2" width="1" height="1.700" fill="#0000ff" opacity="0.68"/><rect x="56.3" y="16.2" width="2" height="1.700" fill="#0000ff" opacity="0.55"/><rect x="58.3" y="16.2" width="1" height="1.700" fill="#0000ff" opacity="0.8"/><rect x="59.3" y="16.2" width="1" height="1.700" fill="#0000ff" opacity="0.68"/><rect x="60.3" y="16.2" width="1" height="1.700" fill="#0000ff" opacity="0.28"/><rect x="61.3" y="16.2" width="2" height="1.700" fill="#0000ff" opacity="0.55"/><rect x="63.3" y="16.2" width="1" height="1.700" fill="#0000ff" opacity="0.68"/><rect x="64.3" y="16.2" width="1" height="1.700" fill="#0000ff" opacity="0.8"/><rect x="65.3" y="16.2" width="1" height="1.700" fill="#0000ff" opacity="0.68"/><rect x="66.3" y="16.2" width="1" height="1.700" fill="#0000ff" opacity="0.28"/><rect x="67.3" y="16.2" width="3" height="1.700" fill="#0000ff" opacity="0.68"/><rect x="70.3" y="16.2" width="1" height="1.700" fill="#0000ff" opacity="0.55"/><rect x="71.3" y="16.2" width="1" height="1.700" fill="#0000ff" opacity="0.68"/><rect x="72.3" y="16.2" width="1" height="1.700" fill="#0000ff" opacity="0.55"/><rect x="73.3" y="16.2" width="1" height="1.700" fill="#0000ff" opacity="0.28"/><rect x="74.3" y="16.2" width="1" height="1.700" fill="#383838" opacity="0.36"/><rect x="24.3" y="18.2" width="1" height="1.700" fill="#383838" opacity="0.36"/><rect x="25.3" y="18.2" width="1" height="1.700" fill="#800000" opacity="0.8"/><rect x="26.3" y="18.2" width="1" height="1.700" fill="#800000" opacity="0.55"/><rect x="27.3" y="18.2" width="1" height="1.700" fill="#800000" opacity="0.68"/><rect x="29.3" y="18.2" width="1" height="1.700" fill="#e50000" opacity="0.68"/><rect x="30.3" y="18.2" width="1" height="1.700" fill="#e50000" opacity="0.55"/><rect x="31.3" y="18.2" width="3" height="1.700" fill="#e50000" opacity="0.68"/><rect x="34.3" y="18.2" width="1" height="1.700" fill="#383838" opacity="0.28"/><rect x="35.3" y="18.2" width="1" height="1.700" fill="#0000ff" opacity="0.28"/><rect x="36.3" y="18.2" width="1" height="1.700" fill="#0000ff" opacity="0.8"/><rect x="37.3" y="18.2" width="1" height="1.700" fill="#0000ff" opacity="0.28"/><rect x="38.3" y="18.2" width="1" height="1.700" fill="#0000ff" opacity="0.55"/><rect x="39.3" y="18.2" width="2" height="1.700" fill="#0000ff" opacity="0.8"/><rect x="42.3" y="18.2" width="1" height="1.700" fill="#0000ff" opacity="0.55"/><rect x="43.3" y="18.2" width="1" height="1.700" fill="#0000ff" opacity="0.68"/><rect x="44.3" y="18.2" width="1" height="1.700" fill="#0000ff" opacity="0.8"/><rect x="45.3" y="18.2" width="1" height="1.700" fill="#0000ff" opacity="0.55"/><rect x="46.3" y="18.2" width="1" height="1.700" fill="#0000ff" opacity="0.68"/><rect x="47.3" y="18.2" width="1" height="1.700" fill="#0000ff" opacity="0.28"/><rect x="48.3" y="18.2" width="1" height="1.700" fill="#0000ff" opacity="0.55"/><rect x="49.3" y="18.2" width="1" height="1.700" fill="#0000ff" opacity="0.68"/><rect x="50.3" y="18.2" width="1" height="1.700" fill="#0000ff" opacity="0.55"/><rect x="51.3" y="18.2" width="1" height="1.700" fill="#0000ff" opacity="0.8"/><rect x="52.3" y="18.2" width="2" height="1.700" fill="#0000ff" opacity="0.28"/><rect x="54.3" y="18.2" width="1" height="1.700" fill="#0000ff" opacity="0.55"/><rect x="55.3" y="18.2" width="1" height="1.700" fill="#0000ff" opacity="0.68"/><rect x="56.3" y="18.2" width="2" height="1.700" fill="#0000ff" opacity="0.55"/><rect x="58.3" y="18.2" width="1" height="1.700" fill="#0000ff" opacity="0.28"/><rect x="59.3" y="18.2" width="3" height="1.700" fill="#0000ff" opacity="0.68"/><rect x="62.3" y="18.2" width="1" height="1.700" fill="#0000ff" opacity="0.55"/><rect x="63.3" y="18.2" width="1" height="1.700" fill="#0000ff" opacity="0.68"/><rect x="64.3" y="18.2" width="1" height="1.700" fill="#0000ff" opacity="0.55"/><rect x="65.3" y="18.2" width="2" height="1.700" fill="#0000ff" opacity="0.68"/><rect x="67.3" y="18.2" width="1" height="1.700" fill="#0000ff" opacity="0.55"/><rect x="68.3" y="18.2" width="1" height="1.700" fill="#0000ff" opacity="0.28"/><rect x="69.3" y="18.2" width="1" height="1.700" fill="#383838" opacity="0.36"/><rect x="28.3" y="20.2" width="1" height="1.700" fill="#383838" opacity="0.36"/><rect x="29.3" y="20.2" width="1" height="1.700" fill="#800000" opacity="0.8"/><rect x="31.3" y="20.2" width="1" height="1.700" fill="#e50000" opacity="0.68"/><rect x="32.3" y="20.2" width="1" height="1.700" fill="#e50000" opacity="0.55"/><rect x="33.3" y="20.2" width="3" height="1.700" fill="#e50000" opacity="0.68"/><rect x="36.3" y="20.2" width="1" height="1.700" fill="#383838" opacity="0.28"/><rect x="37.3" y="20.2" width="1" height="1.700" fill="#0000ff" opacity="0.28"/><rect x="38.3" y="20.2" width="1" height="1.700" fill="#0000ff" opacity="0.55"/><rect x="39.3" y="20.2" width="1" height="1.700" fill="#0000ff" opacity="0.68"/><rect x="40.3" y="20.2" width="1" height="1.700" fill="#0000ff" opacity="0.8"/><rect x="41.3" y="20.2" width="1" height="1.700" fill="#0000ff" opacity="0.55"/><rect x="42.3" y="20.2" width="1" height="1.700" fill="#0000ff" opacity="0.68"/><rect x="43.3" y="20.2" width="1" height="1.700" fill="#0000ff" opacity="0.28"/><rect x="44.3" y="20.2" width="1" height="1.700" fill="#0000ff" opacity="0.55"/><rect x="45.3" y="20.2" width="1" height="1.700" fill="#0000ff" opacity="0.68"/><rect x="46.3" y="20.2" width="1" height="1.700" fill="#0000ff" opacity="0.55"/><rect x="47.3" y="20.2" width="1" height="1.700" fill="#0000ff" opacity="0.8"/><rect x="48.3" y="20.2" width="2" height="1.700" fill="#0000ff" opacity="0.28"/><rect x="50.3" y="20.2" width="2" height="1.700" fill="#0000ff" opacity="0.68"/><rect x="52.3" y="20.2" width="2" height="1.700" fill="#0000ff" opacity="0.8"/><rect x="54.3" y="20.2" width="2" height="1.700" fill="#0000ff" opacity="0.68"/><rect x="56.3" y="20.2" width="1" height="1.700" fill="#0000ff" opacity="0.28"/><rect x="57.3" y="20.2" width="4" height="1.700" fill="#0000ff" opacity="0.55"/><rect x="61.3" y="20.2" width="1" height="1.700" fill="#0000ff" opacity="0.68"/><rect x="63.3" y="20.2" width="1" height="1.700" fill="#0000ff" opacity="0.8"/><rect x="64.3" y="20.2" width="1" height="1.700" fill="#0000ff" opacity="0.28"/><rect x="65.3" y="20.2" width="4" height="1.700" fill="#0000ff" opacity="0.68"/><rect x="70.3" y="20.2" width="1" height="1.700" fill="#0000ff" opacity="0.8"/><rect x="71.3" y="20.2" width="1" height="1.700" fill="#0000ff" opacity="0.28"/><rect x="72.3" y="20.2" width="1" height="1.700" fill="#0000ff" opacity="0.68"/><rect x="73.3" y="20.2" width="1" height="1.700" fill="#0000ff" opacity="0.8"/><rect x="74.3" y="20.2" width="1" height="1.700" fill="#0000ff" opacity="0.28"/><rect x="75.3" y="20.2" width="1" height="1.700" fill="#0000ff" opacity="0.8"/><rect x="76.3" y="20.2" width="1" height="1.700" fill="#0000ff" opacity="0.55"/><rect x="77.3" y="20.2" width="3" height="1.700" fill="#0000ff" opacity="0.68"/><rect x="80.3" y="20.2" width="1" height="1.700" fill="#0000ff" opacity="0.28"/><rect x="81.3" y="20.2" width="1" height="1.700" fill="#383838" opacity="0.36"/><rect x="82.3" y="20.2" width="1" height="1.700" fill="#000000" opacity="0.8"/><rect x="83.3" y="20.2" width="1" height="1.700" fill="#000000" opacity="0.68"/><rect x="84.3" y="20.2" width="1" height="1.700" fill="#000000" opacity="0.55"/><rect x="85.3" y="20.2" width="2" height="1.700" fill="#000000" opacity="0.68"/><rect x="87.3" y="20.2" width="1" height="1.700" fill="#000000" opacity="0.8"/><rect x="88.3" y="20.2" width="1" height="1.700" fill="#000000" opacity="0.68"/><rect x="90.3" y="20.2" width="1" height="1.700" fill="#000000" opacity="0.55"/><rect x="91.3" y="20.2" width="1" height="1.700" fill="#000000" opacity="0.68"/><rect x="93.3" y="20.2" width="3" height="1.700" fill="#000000" opacity="0.68"/><rect x="96.3" y="20.2" width="1" height="1.700" fill="#000000" opacity="0.55"/><rect x="97.3" y="20.2" width="1" height="1.700" fill="#000000" opacity="0.68"/><rect x="98.3" y="20.2" width="1" height="1.700" fill="#000000" opacity="0.8"/><rect x="99.3" y="20.2" width="1" height="1.700" fill="#000000" opacity="0.28"/><rect x="100.3" y="20.2" width="1" height="1.700" fill="#000000" opacity="0.68"/><rect x="101.3" y="20.2" width="1" height="1.700" fill="#000000" opacity="0.55"/><rect x="102.3" y="20.2" width="2" height="1.700" fill="#000000" opacity="0.68"/><rect x="104.3" y="20.2" width="0.7" height="1.700" fill="#000000" opacity="0.8"/><rect x="28.3" y="22.2" width="1" height="1.700" fill="#383838" opacity="0.36"/><rect x="29.3" y="22.2" width="1" height="1.700" fill="#800000" opacity="0.55"/><rect x="30.3" y="22.2" width="1" height="1.700" fill="#800000" opacity="0.68"/><rect x="31.3" y="22.2" width="1" height="1.700" fill="#800000" opacity="0.8"/><rect x="32.3" y="22.2" width="1" height="1.700" fill="#800000" opacity="0.55"/><rect x="33.3" y="22.2" width="1" height="1.700" fill="#800000" opacity="0.68"/><rect x="34.3" y="22.2" width="1" height="1.700" fill="#800000" opacity="0.28"/><rect x="35.3" y="22.2" width="1" height="1.700" fill="#800000" opacity="0.55"/><rect x="36.3" y="22.2" width="1" height="1.700" fill="#800000" opacity="0.68"/><rect x="37.3" y="22.2" width="1" height="1.700" fill="#800000" opacity="0.55"/><rect x="38.3" y="22.2" width="1" height="1.700" fill="#800000" opacity="0.8"/><rect x="40.3" y="22.2" width="2" height="1.700" fill="#383838" opacity="0.36"/><rect x="24.3" y="24.2" width="2" height="1.700" fill="#383838" opacity="0.36"/><rect x="26.3" y="24.2" width="1" height="1.700" fill="#800000" opacity="0.8"/><rect x="27.3" y="24.2" width="1" height="1.700" fill="#800000" opacity="0.55"/><rect x="28.3" y="24.2" width="1" height="1.700" fill="#800000" opacity="0.68"/><rect x="29.3" y="24.2" width="1" height="1.700" fill="#383838" opacity="0.36"/><rect x="20.3" y="26.2" width="2" height="1.700" fill="#383838" opacity="0.36"/><rect x="22.3" y="26.2" width="1" height="1.700" fill="#800000" opacity="0.8"/><rect x="23.3" y="26.2" width="1" height="1.700" fill="#800000" opacity="0.55"/><rect x="24.3" y="26.2" width="1" height="1.700" fill="#800000" opacity="0.68"/><rect x="25.3" y="26.2" width="1" height="1.700" fill="#383838" opacity="0.36"/><rect x="16.3" y="28.2" width="2" height="1.700" fill="#383838" opacity="0.36"/><rect x="18.3" y="28.2" width="1" height="1.700" fill="#800000" opacity="0.8"/><rect x="19.3" y="28.2" width="1" height="1.700" fill="#800000" opacity="0.55"/><rect x="20.3" y="28.2" width="1" height="1.700" fill="#800000" opacity="0.68"/><rect x="21.3" y="28.2" width="1" height="1.700" fill="#383838" opacity="0.36"/><rect x="12.3" y="30.2" width="2" height="1.700" fill="#383838" opacity="0.36"/><rect x="14.3" y="30.2" width="1" height="1.700" fill="#800000" opacity="0.8"/><rect x="15.3" y="30.2" width="1" height="1.700" fill="#800000" opacity="0.55"/><rect x="16.3" y="30.2" width="1" height="1.700" fill="#800000" opacity="0.68"/><rect x="17.3" y="30.2" width="1" height="1.700" fill="#383838" opacity="0.36"/><rect x="8.3" y="32.2" width="2" height="1.700" fill="#383838" opacity="0.36"/><rect x="10.3" y="32.2" width="1" height="1.700" fill="#800000" opacity="0.8"/><rect x="11.3" y="32.2" width="1" height="1.700" fill="#800000" opacity="0.55"/><rect x="12.3" y="32.2" width="1" height="1.700" fill="#800000" opacity="0.68"/><rect x="13.3" y="32.2" width="1" height="1.700" fill="#383838" opacity="0.36"/></svg></div><div class="abs" style="left:905.300px;top:0;width:14.200px;height:506px;border-left:1px solid #e6e6e6;background:#fffffe"></div><div class="abs" style="left:905.300px;top:0;width:14px;height:307.500px;background:#c1c1c1"></div><div class="abs" style="left:905.300px;top:0;width:14px;height:2px;background:#4a4a4a"></div></div>
<div id="rp"></div>
<div class="abs" style="left:1374px;top:268px;width:20px;height:20px;border:1px solid #dfe1ea;border-top:0;border-right:0;border-radius:0 0 0 4px;background:#fff"></div><div class="abs" style="left:1381px;top:277px;width:7px;height:1px;background:#a2a5b9"></div>
<div class="abs" style="left:1034px;top:320px;width:346px;height:1px;background:#e2e5ec"></div>
<div class="abs" style="left:1034px;top:282px;width:96px;height:39px;background:#f2f3f8;border:1px solid #e2e5ec;border-bottom-color:#f2f3f8;border-radius:4px 4px 0 0"></div>
<span class="t" style="left:1050.5px;top:293.98px;font-size:14.2px;letter-spacing:0.166px;color:#3f4254;">Attributes</span><span class="t" style="left:1146.2px;top:293.98px;font-size:14.2px;letter-spacing:-0.033px;color:#22aeea;">Settings</span><div class="inp" style="left:1034px;top:337px;width:346px;height:28px"></div>
<span class="t" style="left:1043.2px;top:345.84px;font-size:12px;letter-spacing:-0.105px;color:#9a9eb0;">Search</span><div class="abs" style="left:1034px;top:372px;width:346px;height:1px;background:#ebedf2"></div>
<svg class="abs" style="left:1035px;top:386px" width="40" height="16" viewBox="0 0 40 16" fill="none" stroke="#3a3c46" stroke-width="1"><rect x="1.500" y="1.500" width="13" height="13" rx="1.300"/><path d="M4.700 8.200h6.600 M8 4.900v6.600" stroke="#8a8c96" stroke-width="1.300"/><path d="M23.500 11.700v-8.200a1 1 0 0 1 1-1h3.300l1.400 1.500h6.300a1 1 0 0 1 1 1v6.200a1 1 0 0 1-1 1h-11a1 1 0 0 1-1-.5z" stroke="#555762"/></svg><span class="t" style="left:1080.3px;top:387.23px;font-size:14.5px;letter-spacing:-0.391px;color:#363843;">Layout</span><svg class="abs" style="left:1035px;top:414px" width="40" height="16" viewBox="0 0 40 16" fill="none" stroke="#3a3c46" stroke-width="1"><rect x="1.500" y="1.500" width="13" height="13" rx="1.300"/><path d="M4.700 8.200h6.600" stroke="#8a8c96" stroke-width="1.300"/><path d="M23.500 11.500v-8a1 1 0 0 1 1-1h3.300l1.400 1.500h5.300a1 1 0 0 1 1 1v1.500" stroke="#555762"/><path d="M24.300 12.500a1 1 0 0 1-1-.8l-.7-4.200a.9 .9 0 0 1 .9-1h12.400a.9 .9 0 0 1 .9 1l-.7 4.200a1 1 0 0 1-1 .8z" stroke="#555762"/></svg><span class="t" style="left:1080.3px;top:415.23px;font-size:14.5px;letter-spacing:-0.375px;color:#363843;">Parameters</span><span class="t" style="left:1080.3px;top:443.23px;font-size:14.5px;letter-spacing:-0.239px;color:#e83e8c;">{{companyName}}</span>
<span class="t" style="left:1080.3px;top:471.23px;font-size:14.5px;letter-spacing:-0.228px;color:#e83e8c;">{{companyAddress}}</span>
<span class="t" style="left:1080.3px;top:499.23px;font-size:14.5px;letter-spacing:-0.232px;color:#e83e8c;">{{companyCity}}</span>
<span class="t" style="left:1080.3px;top:527.23px;font-size:14.5px;letter-spacing:-0.259px;color:#e83e8c;">{{companyProvince}}</span>
<span class="t" style="left:1080.3px;top:555.23px;font-size:14.5px;letter-spacing:-0.232px;color:#e83e8c;">{{companyCountry}}</span>
<span class="t" style="left:1080.3px;top:583.23px;font-size:14.5px;letter-spacing:-0.251px;color:#e83e8c;">{{companyPostalCode}}</span>
<span class="t" style="left:1080.3px;top:611.23px;font-size:14.5px;letter-spacing:-0.205px;color:#e83e8c;">{{companyLogo}}</span>
<span class="t" style="left:1080.3px;top:639.23px;font-size:14.5px;letter-spacing:-0.169px;color:#e83e8c;">{{technicalContactName}}</span>
<span class="t" style="left:1080.3px;top:667.23px;font-size:14.5px;letter-spacing:-0.161px;color:#e83e8c;">{{technicalContactEmail}}</span>
<span class="t" style="left:1058.5px;top:695.03px;font-size:14.5px;letter-spacing:-0.118px;color:#e83e8c;">&lt;login-form/&gt;</span>
<div class="cbl"></div><div class="cbr"></div>
</body>
</html>
